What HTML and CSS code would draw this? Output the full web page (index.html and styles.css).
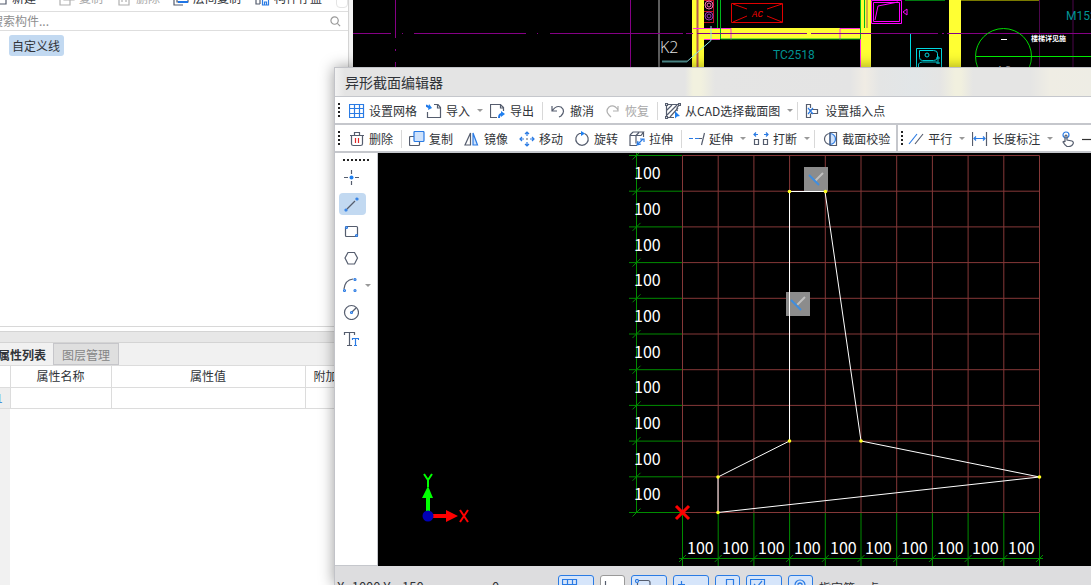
FILE: index.html
```html
<!DOCTYPE html>
<html lang="zh-CN">
<head>
<meta charset="utf-8">
<title>异形截面编辑器</title>
<link rel="stylesheet" href="styles.css">
</head>
<body>
<div class="app">
  <aside class="side">
    <div class="side-tools">
      <button class="side-btn first"><svg class="ico" viewBox="0 0 16 16"><path d="M3 3h11v11H3z" class="ln"/></svg>新建</button>
      <button class="side-btn off"><svg class="ico" viewBox="0 0 16 16"><path d="M5 2h10v8H5zM5 6H1v9h10v-5" class="gy"/></svg>复制</button>
      <button class="side-btn off"><svg class="ico" viewBox="0 0 16 16"><path d="M1 4h14M3 4v11h10V4M6 7v5m4-5v5" class="gy"/></svg>删除</button>
      <button class="side-btn"><svg class="ico" viewBox="0 0 16 16"><path d="M4 5H1v10h9" class="ln"/><path d="M4 6v6h11V6" class="ln"/><path d="M5 12h10" class="bl2"/></svg>层间复制</button>
      <button class="side-btn"><svg class="ico" viewBox="0 0 16 16"><path d="M6 14H2V3h5M6 8v6" class="ln"/><path d="M8.500 7v8h6V7M10.500 15v-3h2v3" class="bl"/></svg>构件存盘</button>
      <span class="more"></span>
    </div>
    <div class="search">
      <input type="text" aria-label="搜索构件" placeholder="搜索构件...">
      <svg class="lens" viewBox="0 0 12 12"><circle cx="5" cy="5" r="4"/><path d="M8 8l3 3"/></svg>
    </div>
    <div class="tree"><button class="node">自定义线</button></div>
    <div class="splitter"></div>
    <div class="tabs"><button class="tab on">属性列表</button><button class="tab">图层管理</button></div>
    <div class="props">
      <table>
        <thead><tr><th class="num"></th><th class="name">属性名称</th><th class="value">属性值</th><th class="extra">附加</th></tr></thead>
        <tbody><tr><td class="num"><span>1</span></td><td></td><td></td><td></td></tr></tbody>
      </table>
    </div>
  </aside>

  <main class="plan">
    <svg class="fill" role="img" aria-label="平面图">
      <g transform="translate(-353 0)" fill="none">
        <path d="M1039.500 0v67M1073 0v67" stroke="#4d064d"/>
        <path d="M395.500 0v38m0 11v2m0 11v5M630.500 0v67" stroke="#850085"/>
        <path d="M659 0v67" stroke="#bbb"/>
        <path d="M961 .500h78" stroke="#7a7a00"/><path d="M905 .500h40" stroke="#007a10"/>
        <path d="M692 0h12v28h156V0h11v67h-11V39H704v28h-12zM949 0h12v67h-12z" fill="#ffff33"/>
        <path d="M697.500 0v67" stroke="#b05a50" stroke-width="2"/>
        <path d="M693 28.500h38v11m109 0v-11h20M704 39.500h16M860.500 39v28" stroke="#ff30e0"/>
        <path d="M717.500 0v28m3-28v39h140V0m4 0v28" stroke="#00b81c"/>
        <path d="M867 0v28" stroke="#b05a50"/>
        <path d="M704 .500h10M704 11.500h10M704 22.500h10M713.500 0v23" stroke="#c01020"/>
        <circle cx="709" cy="5" r="4" stroke="#ff70b8"/><circle cx="709" cy="5" r="2" stroke="#ff70b8"/>
        <circle cx="709" cy="16" r="4" stroke="#9a38b8"/><circle cx="709" cy="16" r="2" stroke="#9a38b8"/>
        <path d="M731.500 3.500h51v19h-51zM733 4l14 5m-14 13l14-6m35-12l-15 5m15 13l-15-6" stroke="#e00000"/>
        <path d="M871.500 .500h30v23h-30zM873.500 2.500h26v19h-26zM875 20l3-14 20-4M907 9l-4 3 4 3z" stroke="#ff00ff"/>
        <path d="M353 33.500h38m11 0h1m11 0h112m11 0h1m12 0h133m3 0h7m4 0h110m4 0h127m4 0h2m3 0h223" stroke="#850085"/>
        <path d="M662 61.500h25" stroke="#4f8f8f" stroke-width="2"/>
        <path d="M687 61.500l24-21V26" stroke="#8ce8e8"/>
        <path d="M910.500 34v33M916.500 67V48.500h25V67M918.500 67v-3q1-2 4-2h15M919.500 50.500h14q4 0 4 3v4q0 3-4 3h-11q-3 0-3-3zM938 56v8m-2-6h4m-4 5h4" stroke="#00d8e0"/>
        <circle cx="927" cy="55" r="2" stroke="#00d8e0"/>
        <circle cx="1003.500" cy="56.500" r="28" stroke="#00d800"/>
        <path d="M976 56.500h115" stroke="#00f000"/>
        <path d="M1001 39.500h6" stroke="#fff"/>
        <text x="660" y="53" class="t-k">K2</text>
        <text x="773" y="59" class="t-cad">TC2518</text>
        <text x="1066" y="20" class="t-cad">M1521</text>
        <text x="752" y="17" class="t-ac">AC</text>
        <text x="996" y="75" class="t-k small">A6</text>
        <text x="1031" y="41" class="t-note">楼梯详见施</text>
      </g>
    </svg>
  </main>

  <section class="dialog" role="dialog" aria-label="异形截面编辑器">
    <h1 class="title">异形截面编辑器</h1>
    <div class="bar">
      <i class="grip"></i>
      <button class="btn tight"><svg class="ico" viewBox="0 0 16 16"><path d="M.500 1.500h14v13H.500zM.500 5.500h14M.500 10.500h14M5.500 1v14M10.500 1v14" class="bl"/></svg>设置网格</button>
      <button class="btn drop"><svg class="ico" viewBox="0 0 16 16"><path d="M8 1.500h4l2.500 3v10h-13V9M11.500 2v3h3" class="ln"/><path d="M0 2q1 2 4 2" class="bl2"/><path d="M3 1l3 4-4 2z" class="bf"/></svg>导入<i class="caret"></i></button>
      <button class="btn"><svg class="ico" viewBox="0 0 16 16"><path d="M7 14.500H.500v-13h10l3 3V8M10.500 2v3h3" class="ln"/><path d="M9 15q0-4 3-4" class="bl2"/><path d="M11 8l4 3-4 3z" class="bf"/></svg>导出</button>
      <i class="sep"></i>
      <button class="btn"><svg class="ico" viewBox="0 0 16 16"><path d="M2 3v5h5M2 8q4-6 9-4 5 4 0 9l-2 1" class="ln"/></svg>撤消</button>
      <button class="btn off"><svg class="ico" viewBox="0 0 16 16"><path d="M13 3v5H8M13 7Q9 1 4 4q-4 4 0 8l2 2" class="gy"/></svg>恢复</button>
      <i class="sep"></i>
      <button class="btn drop"><svg class="ico" viewBox="0 0 16 16"><path d="M2 1.500h12M1.500 2v12M2 14.500h7M14.500 2q-4 3-2 6M2 7l5-5M2 12L12 2M5 14l8-9" class="ln"/><path d="M.500 .500h2v2h-2zM13.500 .500h2v2h-2zM.500 13.500h2v2h-2z" class="ln"/><path d="M10 8l5 5-3 .500-2 2z" class="bf"/></svg>从CAD选择截面图<i class="caret"></i></button>
      <i class="sep"></i>
      <button class="btn"><svg class="ico" viewBox="0 0 16 16"><path d="M5.500 5V1.500h-4v13h4V11M5.500 6.500h7v4h-7" class="ln"/><path d="M3 5l5 6m0-6l-5 6" class="bl"/></svg>设置插入点</button>
    </div>
    <div class="bar">
      <i class="grip"></i>
      <button class="btn"><svg class="ico" viewBox="0 0 16 16"><path d="M1 4.500h14M5.500 4V1.500h5V4M2.500 4v9q0 1.500 2 1.500h7q2 0 2-1.500V4" class="ln"/><path d="M6.500 7v5m3-5v5" class="rd"/></svg>删除</button>
      <i class="sep"></i>
      <button class="btn"><svg class="ico" viewBox="0 0 16 16"><path d="M5 5.500H1.500q-1 0-1 1v7q0 1 1 1h8q1 0 1-1V11" class="ln"/><path d="M6 .500h8q1 0 1 1v8q0 1-1 1H6q-1 0-1-1v-8q0-1 1-1z" class="bt"/></svg>复制</button>
      <button class="btn"><svg class="ico" viewBox="0 0 16 16"><path d="M6.500 2v12H1z" class="ln"/><path d="M9 2v12h4.500z" class="bt"/></svg>镜像</button>
      <button class="btn"><svg class="ico" viewBox="0 0 16 16"><path d="M8 1v4m0 6v4M1 8h4m6 0h4M6 3l2-2 2 2M6 13l2 2 2-2M3 6L1 8l2 2M13 6l2 2-2 2" class="bl"/><path d="M7 8h2" class="ln"/></svg>移动</button>
      <button class="btn"><svg class="ico" viewBox="0 0 16 16"><path d="M10.500 2.500a6.200 6.200 0 1 1-5 0H8" class="ln"/><path d="M7 0l4 2.500L7 5z" class="bf"/></svg>旋转</button>
      <button class="btn"><svg class="ico" viewBox="0 0 16 16"><path d="M8 14.500H1V4.500h6v8M1 4l3-3h10.500L12 4.500H7l3-3M14.500 1v5" class="ln"/><path d="M8 14l6-6M9 10l-1 4 4-1M11 8h4v3" class="bl"/></svg>拉伸</button>
      <i class="sep"></i>
      <button class="btn drop"><svg class="ico" viewBox="0 0 16 16"><path d="M0 7.500h4m2 0h4" class="bl"/><path d="M10 7.500h3M15.500 2l-3 12" class="ln"/></svg>延伸<i class="caret"></i></button>
      <button class="btn drop"><svg class="ico" viewBox="0 0 16 16"><path d="M1.500 8.500h4v5h-4zM10.500 8.500h4v5h-4z" class="ln"/><path d="M1 3.500h4m6 0h4M3 1.500l-2 2 2 2M13 1.500l2 2-2 2" class="bl"/></svg>打断<i class="caret"></i></button>
      <i class="sep"></i>
      <button class="btn"><svg class="ico" viewBox="0 0 16 16"><path d="M8 2.500a5.500 5.500 0 0 0 0 11" class="ln"/><path d="M8 2.500a5.500 5.500 0 0 1 0 11z" class="bt"/><path d="M8 1v14M8 1.500h6.500v13H8" class="ln"/></svg>截面校验</button>
      <i class="divider"></i><i class="grip second"></i>
      <button class="btn drop"><svg class="ico" viewBox="0 0 16 16"><path d="M1 13L9 3" class="bl"/><path d="M7 13l8-10" class="ln"/></svg>平行<i class="caret"></i></button>
      <button class="btn drop"><svg class="ico" viewBox="0 0 16 16"><path d="M.500 1v14M14.500 1v14" class="ln"/><path d="M2 7.500h11M4 5.500l-2 2 2 2M11 5.500l2 2-2 2" class="bl"/></svg>长度标注<i class="caret"></i></button>
      <button class="btn" aria-label="拾取"><svg class="ico" viewBox="0 0 16 16"><circle cx="6" cy="4" r="3" class="bl"/><path d="M5 11V5q1-2 2 0v4l5 1q2 1 1 3-1 2.500-4 2.500H7q-2-1-4-4.500 1-1 2 0" class="ln"/></svg></button>
      <button class="btn near" aria-label="直线"><svg class="ico" viewBox="0 0 16 16"><path d="M0 8.500h16" class="dk"/></svg></button>
    </div>
    <div class="work">
      <nav class="tools">
        <i class="grip-h"></i>
        <button class="tool" aria-label="点"><svg class="ico" viewBox="0 0 16 16"><path d="M8.500 1v4m0 7v4M1 8.500h4m7 0h4" class="ln"/><circle cx="8.500" cy="8.500" r="2" class="bf"/></svg></button>
        <button class="tool on" aria-label="直线"><svg class="ico" viewBox="0 0 16 16"><path d="M4 13l8-8" class="ln"/><circle cx="3" cy="14" r="1" class="bl"/><circle cx="14" cy="3" r="1" class="bl"/></svg></button>
        <button class="tool" aria-label="矩形"><svg class="ico" viewBox="0 0 16 16"><rect x="2.500" y="3.500" width="12" height="10" rx="1" class="ln"/><circle cx="3.500" cy="4.500" r="1" class="bl"/><circle cx="13.500" cy="12.500" r="1" class="bl"/></svg></button>
        <button class="tool" aria-label="多边形"><svg class="ico" viewBox="0 0 16 16"><path d="M5 2.500h6.500l3 5.500-3 6H5L2 8z" class="ln"/></svg></button>
        <button class="tool" aria-label="圆弧"><svg class="ico" viewBox="0 0 16 16"><path d="M1 12Q2 3 10 2" class="ln"/><circle cx="1.500" cy="13.500" r="1" class="bl"/><circle cx="12" cy="2.500" r="1" class="bl"/><circle cx="12" cy="13.500" r="1" class="bl"/></svg><i class="caret"></i></button>
        <button class="tool" aria-label="圆"><svg class="ico" viewBox="0 0 16 16"><circle cx="8.500" cy="8.500" r="7" class="ln"/><path d="M9 8l4-4" class="ln"/><circle cx="8.500" cy="8.500" r="1" class="bl"/></svg></button>
        <button class="tool" aria-label="文字"><svg class="ico" viewBox="0 0 16 16"><path d="M1.500 4V1.500h10V4M6.500 2v12M4 14.500h5" class="ln"/><path d="M9.500 9V7.500h6V9M12.500 8v6m-1.500 .500h3" class="bl"/></svg></button>
      </nav>
      <div class="canvas">
        <svg class="fill" role="img" aria-label="截面图">
          <g transform="translate(-378 -153)" fill="none">
            <path stroke="#853838" d="M682.500 155.500v357m35.700-357v357m35.700-357v357m35.700-357v357m35.700-357v357m35.700-357v357m35.700-357v357m35.700-357v357m35.700-357v357m35.700-357v357m35.700-357v357M682.500 155.500h357m-357 35.700h357m-357 35.700h357m-357 35.700h357m-357 35.700h357m-357 35.700h357m-357 35.700h357m-357 35.700h357m-357 35.700h357m-357 35.700h357m-357 35.700h357"/>
            <path stroke="#008c00" d="M636.500 153v360M629 155.500h53m-53 35.700h53m-53 35.700h53m-53 35.700h53m-53 35.700h53m-53 35.700h53m-53 35.700h53m-53 35.700h53m-53 35.700h53m-53 35.700h53m-53 35.700h53"/>
            <path stroke="#008c00" d="M632.500 159.500l8-8m-8 43.700l8-8m-8 43.700l8-8m-8 43.700l8-8m-8 43.700l8-8m-8 43.700l8-8m-8 43.700l8-8m-8 43.700l8-8m-8 43.700l8-8m-8 43.700l8-8m-8 43.700l8-8"/>
            <path stroke="#008c00" d="M679 558.500h364M682.500 513v53m35.700-53v53m35.700-53v53m35.700-53v53m35.700-53v53m35.700-53v53m35.700-53v53m35.700-53v53m35.700-53v53m35.700-53v53m35.700-53v53"/>
            <path stroke="#008c00" d="M679 562l7-7m28.700 7l7-7m28.700 7l7-7m28.700 7l7-7m28.700 7l7-7m28.700 7l7-7m28.700 7l7-7m28.700 7l7-7m28.700 7l7-7m28.700 7l7-7m28.700 7l7-7"/>
            <g class="badge"><path d="M804 167h24v24h-24zM786 292h24v24h-24z"/></g>
            <path stroke="#fff" d="M789.500 191.500H825l36 249.500 178.500 36L718 512.500V477l71.500-36z"/>
            <path d="M815 181l8-8M797 305l8-8" stroke="#c0c0c0" stroke-width="2"/>
            <path d="M809 175l10 10M791 300l10 10" stroke="#3f8ee0" stroke-width="2"/>
            <g fill="#ffff20"><circle cx="789.500" cy="191.500" r="1.800"/><circle cx="825.500" cy="191.500" r="1.800"/><circle cx="789.500" cy="441" r="1.800"/><circle cx="861" cy="441" r="1.800"/><circle cx="718" cy="477" r="1.800"/><circle cx="718" cy="512.500" r="1.800"/><circle cx="1039.500" cy="477" r="1.800"/></g>
            <path d="M676 506l13 13m0-13l-13 13" stroke="#f00" stroke-width="3"/>
            <g class="dim">
              <text x="634" y="179">100</text><text x="634" y="215">100</text><text x="634" y="251">100</text><text x="634" y="286">100</text><text x="634" y="322">100</text><text x="634" y="358">100</text><text x="634" y="393">100</text><text x="634" y="429">100</text><text x="634" y="465">100</text><text x="634" y="500">100</text>
              <text x="687" y="554">100</text><text x="722" y="554">100</text><text x="758" y="554">100</text><text x="794" y="554">100</text><text x="830" y="554">100</text><text x="865" y="554">100</text><text x="901" y="554">100</text><text x="937" y="554">100</text><text x="972" y="554">100</text><text x="1008" y="554">100</text>
            </g>
            <path d="M426 497h4v15h-4zM422 498l6-12 5 12z" fill="#0f0"/>
            <path d="M432 514h14v4h-14zM446 510l12 6-12 6z" fill="#f00"/>
            <circle cx="428" cy="516" r="5.500" fill="#0000b8"/>
            <path d="M424 474l4 6 4-6m-4 6v7" stroke="#0f0" stroke-width="2"/>
            <path d="M460 510l8 12m0-12l-8 12" stroke="#f00" stroke-width="2"/>
          </g>
        </svg>
      </div>
    </div>
    <footer class="status">
      <output class="coords">X=1000 Y=-150</output><output class="zero">0</output>
      <div class="toggles">
        <button class="toggle" aria-label="栅格"><svg class="ico" viewBox="0 0 16 16"><path d="M.500 .500h14v10H.500zM.500 5.500h14M5.500 0v11M10.500 0v11" class="bl"/></svg></button>
        <button class="toggle plain" aria-label="正交"><svg class="ico" viewBox="0 0 16 16"><path d="M1.500 2v12h12" class="ln"/></svg></button>
        <button class="toggle" aria-label="对象捕捉"><svg class="ico" viewBox="0 0 16 16"><path d="M4 1.500h9q2 0 2 2v8H2.500V4" class="ln"/><circle cx="2" cy="2" r="1.500" class="bl"/></svg></button>
        <button class="toggle" aria-label="动态输入"><svg class="ico" viewBox="0 0 16 16"><path d="M4.500 2v8M1 5.500h7" class="bl"/></svg></button>
        <button class="toggle slim" aria-label="追踪"><svg class="ico" viewBox="0 0 16 16"><path d="M7.500 8V.500h7v11h-7M7.500 5.500v3" class="bl"/></svg></button>
        <button class="toggle" aria-label="约束"><svg class="ico" viewBox="0 0 16 16"><path d="M.500 .500h14v12H.500zM4 5l3 3 5-6" class="bl"/></svg></button>
        <button class="toggle slim" aria-label="提示"><svg class="ico" viewBox="0 0 16 16"><circle cx="8" cy="6" r="5" class="bl"/><path d="M6 7V5q2-2 4 0v2" class="bl"/></svg></button>
      </div>
      <span class="hint">指定第一点</span>
    </footer>
  </section>
</div>
</body>
</html>
```

FILE: styles.css
```css
* { box-sizing: border-box; }
body { margin: 0; font: 12px/20px "Noto Sans CJK SC", sans-serif; color: #303338; }
button { font: inherit; color: inherit; border: 0; background: none; padding: 0; white-space: nowrap; }
.app { position: relative; display: flex; height: 100vh; overflow: hidden; background: #f4f4f4; }
.fill { display: block; width: 100%; height: 100%; }

/* icon strokes */
.ico { width: 16px; height: 16px; flex: none; fill: none; stroke-width: 1.2; }
.ln { stroke: #555d6e; }
.gy { stroke: #b0b0b0; }
.bl { stroke: #2a7be4; }
.bl2 { stroke: #1f75e6; stroke-width: 2; }
.bf { fill: #1f80f0; }
.bt { fill: #cfe2fb; stroke: #2a7be4; }
.rd { stroke: #e02828; }
.dk { stroke: #333; }
.off { color: #a8a8a8; }

/* component list */
.side { width: 349px; flex: none; display: flex; flex-direction: column; background: #fff; border-right: 1px solid #d4d4d4; overflow: hidden; }
.side-tools { display: flex; gap: 13px; align-items: center; height: 24px; margin: -12px 0 0 -8px; border-bottom: 1px solid #dedede; flex: none; }
.side-btn { display: flex; align-items: center; gap: 4px; height: 20px; margin-bottom: 4px; }
.side-btn.first { margin-right: 10px; }
.more { width: 12px; height: 16px; margin-left: 1px; border: 1px solid #e4e4e4; border-radius: 4px; }
.search { display: flex; align-items: center; height: 19px; flex: none; padding-right: 7px; border-bottom: 1px solid #dedede; }
.search input { flex: 1; min-width: 0; height: 18px; margin-left: -9px; border: 0; padding: 0; font: inherit; outline: 0; }
.search input::placeholder { color: #8e8e8e; opacity: 1; }
.lens { width: 11px; height: 11px; fill: none; stroke: #999; stroke-width: 1.3; }
.tree { flex: 1; padding: 4px 9px; border-bottom: 1px solid #d8d8d8; }
.node { height: 21px; padding: 0 4px 0 3px; border-radius: 3px; background: #c2d9f1; line-height: 20px; }
.splitter { height: 12px; margin-top: 4px; flex: none; background: #e7e7e7; border: solid #d4d4d4; border-width: 1px 0; }
.tabs { display: flex; height: 23px; flex: none; background: #f1f1f1; border-bottom: 1px solid #dcdcdc; }
.tab { width: 66px; border: 1px solid #c6c6ca; background: #dfdfdf; color: #858585; line-height: 22px; }
.tab.on { width: 62px; margin-left: -9px; border-color: #f1f1f1; background: #f1f1f1; color: #303338; font-weight: bold; }
.props { height: 219px; flex: none; background: linear-gradient(90deg, #f1f1f1 10px, #fff 10px); }
table { width: 100%; margin-left: -1px; border-collapse: collapse; table-layout: fixed; }
th, td { height: 21px; padding: 0; border: 1px solid #dcdcdc; border-width: 0 1px 1px 0; background: #fff; font-weight: normal; line-height: 20px; }
.num { width: 11px; }
td.num { background: #eee; color: #4a90d8; text-align: left; line-height: 18px; }
.num span { margin-left: -3px; }
.name { width: 101px; }
.value { width: 194px; }
.extra { padding-left: 8px; text-align: left; }

/* floor plan */
.plan { flex: 1; min-width: 0; margin-left: 4px; background: #000; }
.t-k { font: 300 16px "Open Sans", sans-serif; fill: #e4e4e4; }
.t-k.small { font-size: 13px; }
.t-cad { font: 12px Roboto, sans-serif; fill: #009494; }
.t-ac { font: italic 9px "Liberation Mono", monospace; fill: #f00; }
.t-note { font: bold 7px "Noto Sans CJK SC", sans-serif; fill: #fff; }

/* section editor */
.dialog { position: absolute; left: 334px; top: 67px; right: 0; bottom: 0; display: flex; flex-direction: column; border: 1px solid #c2c3c8; border-width: 1px 0 0 1px; background: #fff; box-shadow: 0 0 14px rgba(0, 0, 0, .4); }
.title { margin: 0; height: 29px; flex: none; padding-left: 10px; border-bottom: 1px solid #c5c7cc; font-size: 14px; font-weight: normal; line-height: 28px;
  background: linear-gradient(90deg, #f2f2f2, #e4e4e4 10px, #e4e4e4 350px, #f2f1df 358px, #f2f1df 366px, #e5e5e4 380px, #e4e4e4 515px, #f0ece4 530px, #e4e5e5 545px, #e2e6e8 580px, #e5e5e4 605px, #f1f0df 620px, #f1f0df 626px, #e5e5e4 638px, #e5e5e4 695px, #efede4 715px, #eeede5); }
.bar { display: flex; align-items: center; height: 28px; flex: none; padding: 1px 0 0 3px; border-bottom: 2px solid #c5c7cc; overflow: hidden; }
.btn { display: flex; align-items: center; gap: 4px; flex: none; height: 22px; padding: 0 6px 0 5px; }
.btn.tight { padding-right: 4px; }
.btn.drop { padding-right: 2px; }
.btn.near { padding-left: 0; }
.caret { width: 0; height: 0; flex: none; margin-left: 3px; border: solid transparent; border-width: 3px 3px 0; border-top-color: #999; }
.sep { width: 1px; height: 18px; flex: none; margin: 0 2px; background: #d8d8d8; }
.divider { width: 2px; height: 28px; flex: none; background: #c5c7cc; }
.grip { width: 2px; height: 16px; flex: none; margin-right: 4px; background: repeating-linear-gradient(#222 0 2px, transparent 2px 4px); }
.grip.second { margin: 0 0 0 3px; }
.work { flex: 1; min-height: 0; display: flex; }
.tools { width: 43px; flex: none; display: flex; flex-direction: column; gap: 5px; padding: 6px 0 0 4px; border: solid #c5c7cc; border-width: 0 1px 1px 0; }
.grip-h { width: 26px; height: 2px; margin: 0 0 0 4px; background: repeating-linear-gradient(90deg, #222 0 2px, transparent 2px 4px); }
.tool { position: relative; display: flex; align-items: center; width: 27px; height: 22px; padding-left: 4px; border-radius: 4px; }
.tool.on { background: #c2d9f1; }
.tool .caret { position: absolute; left: 23px; top: 10px; }
.canvas { flex: 1; min-width: 0; background: #000; overflow: hidden; }
.badge { fill: #8c8c8c; }
.dim { font: 16px "Noto Sans CJK SC", sans-serif; fill: #fff; }
.status { display: flex; align-items: flex-start; height: 19px; flex: none; background: #dddddf; overflow: hidden; }
.coords, .zero { padding: 11px 0 0 2px; width: 155px; font-size: 13px; line-height: 20px; }
.zero { width: 68px; }
.toggles { display: flex; gap: 6px; padding-top: 9px; }
.toggle { width: 36px; height: 24px; padding: 3px; border: 1px solid #2a7be4; border-radius: 3px; background: #d6e5fa; text-align: left; line-height: 16px; }
.toggle.plain { width: 25px; background: #fff; border-color: #999; }
.toggle.slim { width: 25px; }
.hint { padding: 12px 0 0 6px; }
```
